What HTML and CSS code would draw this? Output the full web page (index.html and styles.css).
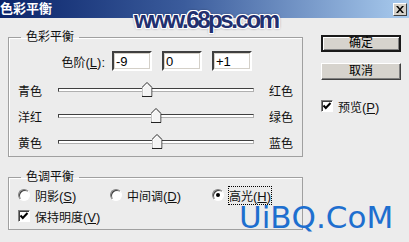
FILE: index.html
```html
<!DOCTYPE html>
<html lang="zh-CN">
<head>
    <meta charset="UTF-8">
    <title>色彩平衡</title>
    <link rel="stylesheet" href="styles.css">
</head>
<body>
    <div class="dialog">
        <div class="titlebar">
            <span class="title">色彩平衡</span>
            <span class="close">
                <svg width="8" height="7" viewBox="0 0 8 7"><path d="M0 0h2l2 2.5 2-2.5h2l-3 3.5 3 3.5h-2l-2-2.5-2 2.5h-2l3-3.5z" fill="#000"/></svg>
            </span>
        </div>

        <div class="content">
            <div class="main">
                <fieldset class="group group-balance">
                    <legend>色彩平衡</legend>
                    <div class="levels">
                        <label class="levels-label">色阶<span class="key">(<u>L</u>):</span></label>
                        <input class="field" type="text" value="-9">
                        <input class="field" type="text" value="0">
                        <input class="field" type="text" value="+1">
                    </div>
                    <div class="sliders">
                        <div class="slider-row">
                            <span class="lbl">青色</span>
                            <div class="track"><span class="thumb" style="left: 45.5%"></span></div>
                            <span class="lbl-r">红色</span>
                        </div>
                        <div class="slider-row">
                            <span class="lbl">洋红</span>
                            <div class="track"><span class="thumb" style="left: 50%"></span></div>
                            <span class="lbl-r">绿色</span>
                        </div>
                        <div class="slider-row">
                            <span class="lbl">黄色</span>
                            <div class="track"><span class="thumb" style="left: 50.5%"></span></div>
                            <span class="lbl-r">蓝色</span>
                        </div>
                    </div>
                </fieldset>

                <fieldset class="group group-tone">
                    <legend>色调平衡</legend>
                    <div class="tone-row">
                        <span class="opt opt-1"><span class="radio"></span><span>阴影<span class="key">(<u>S</u>)</span></span></span>
                        <span class="opt opt-2"><span class="radio"></span><span>中间调<span class="key">(<u>D</u>)</span></span></span>
                        <span class="opt"><span class="radio on"></span><span class="focus">高光<span class="key">(<u>H</u>)</span></span></span>
                    </div>
                    <div class="keep-row">
                        <span class="check"></span><span>保持明度<span class="key">(<u>V</u>)</span></span>
                    </div>
                </fieldset>
            </div>

            <div class="side">
                <button class="btn btn-default">确定</button>
                <button class="btn">取消</button>
                <div class="preview"><span class="check"></span><span>预览<span class="key">(<u>P</u>)</span></span></div>
            </div>
        </div>

        <div class="mark-68">www.68ps.com</div>
        <div class="mark-uibq">UiBQ.CoM</div>
    </div>
</body>
</html>
```

FILE: styles.css
```css
body {
    margin: 0;
    background: #ececec;
    font-family: "Liberation Sans", "Noto Sans CJK SC", sans-serif;
    font-size: 12px;
    color: #111;
    text-autospace: no-autospace;
    text-spacing-trim: space-all;
}
.key {
    font-family: "Liberation Sans", sans-serif;
    font-size: 13px;
}
.dialog {
    position: relative;
    width: 409px;
    height: 242px;
    overflow: hidden;
    background: #ececec;
}
.titlebar {
    height: 18px;
    display: flex;
    align-items: center;
    justify-content: space-between;
    padding-right: 2px;
    background: linear-gradient(to right, #0a246a, #3b5c9c 45%, #a9cbee);
}
.title {
    color: #fff;
    font-weight: bold;
    font-size: 13px;
    line-height: 18px;
}
.close {
    width: 14px;
    height: 13px;
    box-sizing: border-box;
    display: flex;
    align-items: center;
    justify-content: center;
    background: #d4d0c8;
    border: 1px solid;
    border-color: #fff #404040 #404040 #fff;
}
.content {
    display: flex;
    padding: 12px 0 0 8px;
}
.main {
    width: 295px;
    display: flex;
    flex-direction: column;
    gap: 13px;
}
.group {
    margin: 0;
    padding: 0 0 0 9px;
    min-width: 0;
    box-sizing: border-box;
    border: 1px solid #a0a0a0;
    box-shadow: inset 1px 1px 0 #fff;
}
.group legend {
    margin-left: 3px;
    padding: 0 5px;
    line-height: 14px;
}
.group-balance {
    height: 127px;
}
.group-tone {
    height: 60px;
}
u {
    text-decoration: underline;
    text-underline-offset: 1px;
}

/* levels */
.levels {
    display: flex;
    align-items: center;
    height: 20px;
    margin-top: 7px;
}
.levels-label {
    width: 94px;
    box-sizing: border-box;
    padding-right: 7px;
    text-align: right;
}
.field {
    width: 40px;
    height: 20px;
    box-sizing: border-box;
    margin: 0 10px 0 0;
    padding: 0 0 0 2px;
    border: 2px solid;
    border-color: #404040 #fff #fff #404040;
    box-shadow: 1px 1px 0 #d4d0c8 inset, -1px -1px 0 #d4d0c8 inset;
    background: #fff;
    font-family: "Liberation Sans", sans-serif;
    font-size: 13px;
    color: #000;
}

/* sliders */
.sliders {
    margin-top: 11px;
    display: flex;
    flex-direction: column;
    gap: 10px;
}
.slider-row {
    display: flex;
    align-items: center;
    height: 16px;
}
.lbl {
    width: 40px;
}
.track {
    position: relative;
    width: 196px;
    height: 4px;
    box-sizing: border-box;
    border: 1px solid;
    border-color: #404040 #b0b0b0 #b0b0b0 #404040;
    background: #fff;
}
.thumb {
    position: absolute;
    top: -7px;
    width: 11px;
    height: 15px;
    transform: translateX(-50%);
    background: url("data:image/svg+xml,%3Csvg xmlns='http://www.w3.org/2000/svg' width='11' height='15'%3E%3Cpath d='M5.5 0.5L10.5 5.5V14.5H0.5V5.5Z' fill='%23f4f4f4' stroke='%23222'/%3E%3Cpath d='M1.5 13.5V6L5.5 1.8' fill='none' stroke='%23fff'/%3E%3C/svg%3E") no-repeat;
}
.lbl-r {
    margin-left: 15px;
}

/* tone */
.tone-row {
    display: flex;
    align-items: center;
    height: 14px;
    margin-top: 4px;
}
.opt {
    display: flex;
    align-items: center;
    gap: 5px;
}
.opt-1 {
    width: 92px;
}
.opt-2 {
    width: 102px;
}
.radio {
    position: relative;
    width: 12px;
    height: 12px;
    box-sizing: border-box;
    border-radius: 50%;
    border: 1px solid;
    border-color: #808080 #fff #fff #808080;
    box-shadow: inset 1px 1px 0 #404040;
    background: #fff;
}
.radio.on::after {
    content: "";
    position: absolute;
    left: 3px;
    top: 3px;
    width: 4px;
    height: 4px;
    border-radius: 50%;
    background: #000;
}
.focus {
    outline: 1px dotted #000;
    outline-offset: 0;
}
.keep-row {
    display: flex;
    align-items: center;
    gap: 5px;
    height: 14px;
    margin-top: 7px;
}
.check {
    width: 12px;
    height: 12px;
    box-sizing: border-box;
    border: 1px solid;
    border-color: #808080 #fff #fff #808080;
    box-shadow: inset 1px 1px 0 #404040;
    background: #fff url("data:image/svg+xml,%3Csvg xmlns='http://www.w3.org/2000/svg' width='10' height='10'%3E%3Cpath d='M1.5 4.5L3.8 7L8.5 2' fill='none' stroke='%23000' stroke-width='2'/%3E%3C/svg%3E") no-repeat 0 0;
}

/* side */
.side {
    display: flex;
    flex-direction: column;
    width: 80px;
    margin-left: 18px;
    padding-top: 5px;
}
.btn {
    height: 17px;
    padding: 0;
    margin: 0 0 11px;
    box-sizing: border-box;
    font-family: inherit;
    font-size: 12px;
    line-height: 13px;
    color: #000;
    background: #d6d3cd;
    border: 1px solid;
    border-color: #fff #404040 #404040 #fff;
    box-shadow: inset -1px -1px 0 #808080;
}
.btn-default {
    border: 2px solid #1a1a1a;
    box-shadow: inset 1px 1px 0 #fff, inset -1px -1px 0 #808080;
}
.preview {
    display: flex;
    align-items: center;
    gap: 5px;
    height: 14px;
    margin-top: 8px;
}

/* watermarks over the dialog */
.mark-68 {
    position: absolute;
    left: 134px;
    top: 8px;
    font-family: "Liberation Sans", sans-serif;
    font-weight: bold;
    font-size: 24px;
    line-height: 1;
    letter-spacing: -2.4px;
    color: #22306f;
    text-shadow: -1px 0 #fff, 1px 0 #fff, 0 -1px #fff, 0 1px #fff,
        -1px -1px #fff, 1px 1px #fff, 1px -1px #fff, -1px 1px #fff, 0 0 3px #223;
}
.mark-uibq {
    position: absolute;
    left: 239px;
    top: 205px;
    font-family: "DejaVu Sans", sans-serif;
    font-size: 31px;
    line-height: 24px;
    color: #1e6fcf;
}
```
